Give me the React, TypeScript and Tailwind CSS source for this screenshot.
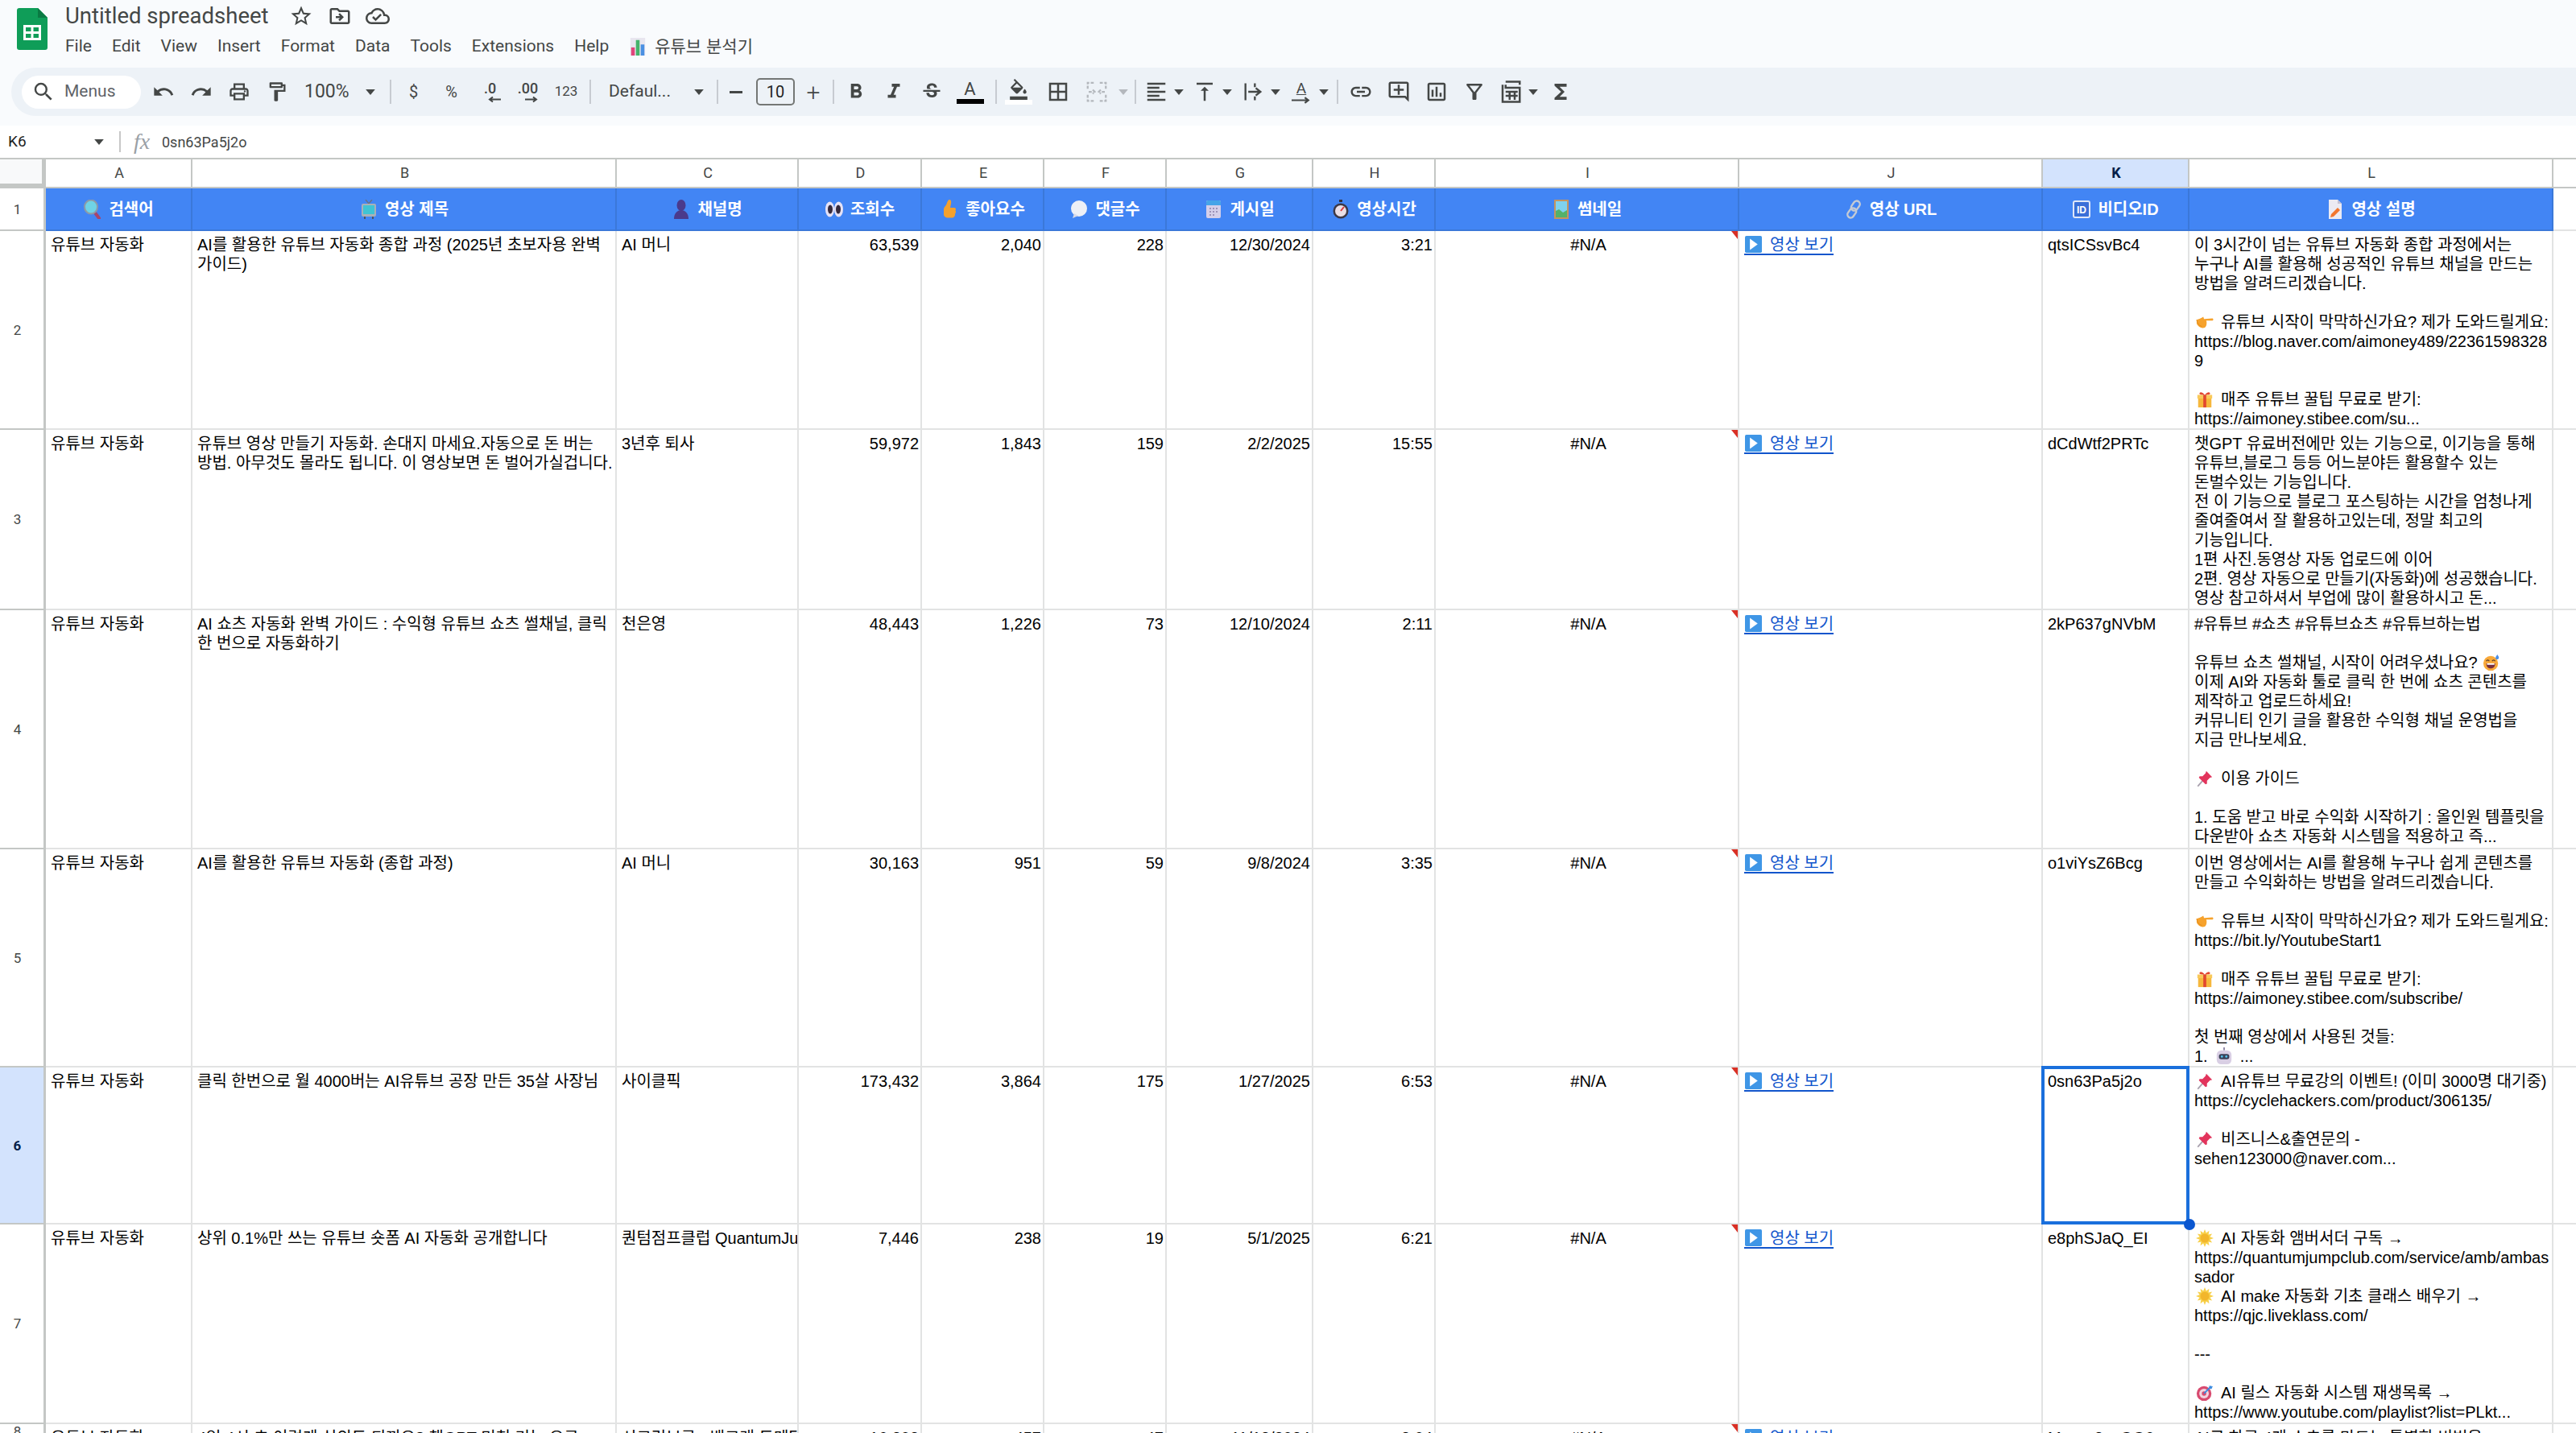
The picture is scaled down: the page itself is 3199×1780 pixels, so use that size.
import React from 'react'
import {
  MdArrowDropDown,
  MdBorderAll,
  MdFormatAlignLeft,
  MdFormatBold,
  MdFormatColorFill,
  MdFormatItalic,
  MdFunctions,
  MdLink,
  MdOutlineAddComment,
  MdOutlineCloudDone,
  MdOutlineDriveFileMove,
  MdOutlineFilterAlt,
  MdOutlineFormatPaint,
  MdOutlineInsertChart,
  MdOutlinePrint,
  MdRedo,
  MdSearch,
  MdStarBorder,
  MdStrikethroughS,
  MdUndo,
  MdVerticalAlignTop,
} from 'react-icons/md'

type EmojiName =
  | 'mag' | 'tv' | 'bust' | 'eyes' | 'thumb' | 'speech' | 'calendar' | 'timer' | 'picture'
  | 'link' | 'id' | 'doc' | 'play' | 'point' | 'gift' | 'sweat' | 'pin' | 'robot' | 'sun' | 'dart' | 'bars'

const Emoji: React.FC<{ name: EmojiName; className?: string }> = ({ name, className = 'w-[22px] h-[22px]' }) => {
  const shapes: Record<EmojiName, React.ReactNode> = {
    mag: (
      <>
        <path d="M14 15l6 8" stroke="#a8456b" strokeWidth="4" strokeLinecap="round" />
        <ellipse cx="10" cy="9" rx="8" ry="8.500" fill="#6fd3e6" stroke="#8d9aa8" strokeWidth="2" />
      </>
    ),
    tv: (
      <>
        <path d="M8 0l4 5 4-5" stroke="#6b7280" strokeWidth="1.400" fill="none" />
        <rect x="3" y="5" width="18" height="16" rx="2" fill="#a9b0b8" />
        <rect x="5" y="7" width="14" height="11" fill="#3fc4d4" />
        <path d="M7 21v3M17 21v3" stroke="#4b5563" strokeWidth="2" />
      </>
    ),
    bust: (
      <>
        <ellipse cx="12" cy="7" rx="5.500" ry="7" fill="#4a3a8c" />
        <path d="M3 24c0-7 4-11 9-11s9 4 9 11z" fill="#4a3a8c" />
      </>
    ),
    eyes: (
      <>
        <ellipse cx="6.500" cy="12" rx="5.500" ry="9.500" fill="#e6e2f5" />
        <ellipse cx="17.500" cy="12" rx="5.500" ry="9.500" fill="#e6e2f5" />
        <ellipse cx="7" cy="12" rx="3" ry="5.500" fill="#352a3e" />
        <ellipse cx="17" cy="12" rx="3" ry="5.500" fill="#352a3e" />
      </>
    ),
    thumb: (
      <path
        d="M12 0c2 0 2.500 2 2 5l-1 5h5c2 0 2.500 2 1.500 3.500 1 1.500.5 3-.5 4 .5 2-1 5-3 5H10c-2 0-5-1.500-5-4v-7c0-2 2-3 3-5 1-2 2-6.500 4-6.500z"
        fill="#f4a12e"
      />
    ),
    speech: (
      <>
        <ellipse cx="12" cy="11" rx="10" ry="10" fill="#eef0f6" />
        <path d="M6 17l-2 6 7-3z" fill="#d8dbe8" />
      </>
    ),
    calendar: (
      <>
        <rect x="3" y="1" width="18" height="22" rx="2" fill="#d5cfe9" />
        <path d="M3 3a2 2 0 012-2h14a2 2 0 012 2v4H3z" fill="#46a4e8" />
        <path d="M7 10h2v2H7zM11 10h2v2h-2zM15 10h2v2h-2zM7 14h2v2H7zM11 14h2v2h-2zM15 14h2v2h-2zM7 18h2v2H7zM11 18h2v2h-2z" fill="#9d93b8" />
      </>
    ),
    timer: (
      <>
        <rect x="10" y="0" width="4" height="3" fill="#33303c" />
        <circle cx="12" cy="14" r="9.500" fill="#3c3846" />
        <circle cx="12" cy="14" r="7" fill="#eadfe6" />
        <path d="M12 14l4-5" stroke="#d9383c" strokeWidth="2" />
      </>
    ),
    picture: (
      <>
        <rect x="3" y="0" width="18" height="24" fill="#c59560" />
        <rect x="5" y="2" width="14" height="20" fill="#7fd2ef" />
        <path d="M5 22v-8l4-2 5 4 5-3v9z" fill="#53b26a" />
      </>
    ),
    link: (
      <g fill="none" stroke="#c4cad4" strokeWidth="2.400">
        <rect x="10" y="1" width="8" height="13" rx="4" transform="rotate(35 14 8)" />
        <rect x="6" y="10" width="8" height="13" rx="4" transform="rotate(35 10 16)" />
      </g>
    ),
    id: (
      <>
        <rect x="2" y="2" width="20" height="20" rx="2" fill="#3a6fd8" stroke="#dfe7f8" strokeWidth="2" />
        <text x="12" y="16.500" textAnchor="middle" fontSize="12" fontWeight="700" fill="#fff" fontFamily="Liberation Sans">ID</text>
      </>
    ),
    doc: (
      <>
        <path d="M4 0h11l5 5v19H4z" fill="#eceaf2" />
        <path d="M15 0l5 5h-5z" fill="#c5c1d3" />
        <path d="M7 18l8-8 3 3-8 8-4 1z" fill="#f2762e" />
      </>
    ),
    play: (
      <>
        <rect x="0" y="0" width="24" height="24" rx="2" fill="#3f96e6" />
        <path d="M7 4l11 8-11 8z" fill="#fff" />
      </>
    ),
    point: (
      <>
        <path d="M1 9c3-1 6-2 9-4l1 3 11-1c2 0 2 3 0 3h-8c1 2 1 9-3 10-5 1-9-3-10-6z" fill="#f6a22c" />
        <path d="M1 9c1 5 3 8 7 9" stroke="#e28a18" strokeWidth="1" fill="none" />
      </>
    ),
    gift: (
      <>
        <rect x="3" y="10" width="18" height="13" fill="#f6b73c" />
        <rect x="2" y="6" width="20" height="5" fill="#f9c95a" />
        <rect x="10" y="6" width="4" height="17" fill="#e2472f" />
        <path d="M12 6C8 1 4 2 5 5c.5 1 4 1 7 1zm0 0c4-5 8-4 7-1-.5 1-4 1-7 1z" fill="#e2472f" />
      </>
    ),
    sweat: (
      <>
        <circle cx="11" cy="13" r="10" fill="#f8a93a" />
        <path d="M5 13h12c0 5-3 7-6 7s-6-2-6-7z" fill="#7a2e3b" />
        <path d="M6 13h10v2H6z" fill="#fff" />
        <path d="M5 10c1-2 3-2 4 0M13 10c1-2 3-2 4 0" stroke="#5a3b26" strokeWidth="1.400" fill="none" />
        <path d="M20 1c-2 3-3 4-2 6 1 1 3 1 4-1 .4-2-1-3-2-5z" fill="#4c8fe6" />
      </>
    ),
    pin: (
      <>
        <path d="M3 22l7-8" stroke="#a9a1ae" strokeWidth="2" strokeLinecap="round" />
        <path d="M14 2l8 8-3 1-4 4 0 4-2 1-9-9 1-2 4 0 4-4z" fill="#e2345c" />
      </>
    ),
    robot: (
      <>
        <rect x="11" y="0" width="2" height="4" fill="#8a84a3" />
        <rect x="2" y="4" width="20" height="19" rx="6" fill="#d9cfe4" />
        <rect x="5" y="9" width="14" height="7" rx="3" fill="#3a4258" />
        <circle cx="9" cy="12.500" r="1.500" fill="#58c6f0" />
        <circle cx="15" cy="12.500" r="1.500" fill="#58c6f0" />
      </>
    ),
    sun: (
      <>
        <path
          d="M12 0l2 5 4-3-1 5 5-1-3 4 5 2-5 2 3 4-5-1 1 5-4-3-2 5-2-5-4 3 1-5-5 1 3-4-5-2 5-2-3-4 5 1-1-5 4 3z"
          fill="#f8d04a"
        />
        <circle cx="12" cy="12" r="6" fill="#f2b62c" />
      </>
    ),
    dart: (
      <>
        <circle cx="11" cy="13" r="10" fill="#d84a6f" />
        <circle cx="11" cy="13" r="6.500" fill="#f1d3de" />
        <circle cx="11" cy="13" r="3" fill="#d84a6f" />
        <path d="M11 13L21 3" stroke="#3a8be0" strokeWidth="2" />
        <path d="M18 2l2 2 3-1-2 4-3-1z" fill="#3a8be0" />
      </>
    ),
    bars: (
      <>
        <rect x="2" y="0" width="20" height="24" fill="#e8e6ef" />
        <rect x="3" y="13" width="5" height="11" fill="#e0457b" />
        <rect x="9.500" y="3" width="5" height="21" fill="#45b36b" />
        <rect x="16" y="9" width="5" height="15" fill="#4a90e2" />
      </>
    ),
  }
  return (
    <svg viewBox="0 0 24 24" className={`shrink-0 ${className}`}>
      {shapes[name]}
    </svg>
  )
}

const SheetsLogo = () => (
  <svg viewBox="0 0 38 52" className="w-[38px] h-[52px] shrink-0">
    <path d="M3 0h23l12 12v37a3 3 0 01-3 3H3a3 3 0 01-3-3V3a3 3 0 013-3z" fill="#0f9d58" />
    <path d="M26 0l12 12H26z" fill="#0a7a43" />
    <path d="M8 21h22v19H8zm3 3v5h6.500v-5zm9.500 0v5H27v-5zM11 32v5h6.500v-5zm9.500 0v5H27v-5z" fill="#fff" fillRule="evenodd" />
  </svg>
)

const Sep = ({ className }: { className: string }) => <div className={`w-[2px] h-[30px] bg-[#c7cbd1] shrink-0 ${className}`} />

const Tool: React.FC<{ children: React.ReactNode; className?: string }> = ({ children, className = 'w-[47px]' }) => (
  <div className={`h-[40px] flex items-center justify-center shrink-0 text-[#444746] ${className}`}>{children}</div>
)

const Arrow = ({ className = 'text-[#444746]' }: { className?: string }) => (
  <svg viewBox="0 0 10 6" className={`w-[12px] h-[7px] shrink-0 ${className}`}>
    <path d="M0 0h10L5 6z" fill="currentColor" />
  </svg>
)

const DropTool: React.FC<{ children: React.ReactNode; className?: string }> = ({ children, className = '' }) => (
  <div className={`h-[40px] w-[60px] flex items-center shrink-0 text-[#444746] ${className}`}>
    <div className="w-[44px] flex justify-center">{children}</div>
    <Arrow />
  </div>
)

const Toolbar = () => (
  <div className="h-[60px] ml-[14px] pl-[13px] rounded-l-[30px] bg-[#edf2f7] flex items-center font-['Roboto',sans-serif]">
    <div className="w-[148px] h-[41px] rounded-full bg-white flex items-center shrink-0 text-[#444746]">
      <MdSearch className="w-[30px] h-[30px] ml-[12px]" />
      <span className="ml-[11px] text-[21px] text-[#5f6368]">Menus</span>
    </div>
    <Tool className="w-[47px] ml-[4px]"><MdUndo size={28} /></Tool>
    <Tool><MdRedo size={28} /></Tool>
    <Tool><MdOutlinePrint size={28} /></Tool>
    <Tool><MdOutlineFormatPaint size={28} /></Tool>
    <div className="w-[112px] h-[40px] flex items-center shrink-0 text-[23px] text-[#444746]">
      <span className="ml-[11px] w-[76px]">100%</span>
      <Arrow />
    </div>
    <Sep className="ml-[5px]" />
    <Tool className="w-[47px] ml-[4px] text-[20px]"><span>$</span></Tool>
    <Tool className="w-[47px] text-[20px]"><span>%</span></Tool>
    <Tool className="w-[47px] ml-[1px]">
      <div className="flex flex-col items-center leading-[18px] text-[18px] font-medium">
        <span>.0</span>
        <svg viewBox="0 0 16 8" className="w-[16px] h-[9px] ml-[10px]"><path d="M16 4H3M6 1L2 4l4 3" stroke="currentColor" strokeWidth="2" fill="none" /></svg>
      </div>
    </Tool>
    <Tool>
      <div className="flex flex-col items-center leading-[18px] text-[18px] font-medium">
        <span>.00</span>
        <svg viewBox="0 0 16 8" className="w-[16px] h-[9px] ml-[8px]"><path d="M0 4h13M10 1l4 3-4 3" stroke="currentColor" strokeWidth="2" fill="none" /></svg>
      </div>
    </Tool>
    <Tool className="w-[48px] text-[17px]"><span>123</span></Tool>
    <Sep className="ml-[5px]" />
    <div className="w-[156px] h-[40px] flex items-center shrink-0 text-[21px] text-[#444746]">
      <span className="ml-[22px] w-[106px]">Defaul...</span>
      <Arrow />
    </div>
    <Sep className="" />
    <Tool className="w-[44px] text-[24px]"><span className="w-[16px] h-[3px] bg-[#444746]" /></Tool>
    <div className="w-[48px] h-[34px] ml-[3px] rounded-[5px] border-2 border-[#747775] flex items-center justify-center text-[20px] text-[#1f1f1f] shrink-0">10</div>
    <Tool className="w-[46px] text-[30px] font-light"><span>+</span></Tool>
    <Sep className="ml-[1px]" />
    <Tool className="w-[47px] ml-[3px]"><MdFormatBold size={30} /></Tool>
    <Tool><MdFormatItalic size={30} /></Tool>
    <Tool className="w-[48px]"><MdStrikethroughS size={28} /></Tool>
    <Tool>
      <div className="flex flex-col items-center w-[34px]">
        <span className="text-[22px] leading-[24px]">A</span>
        <span className="w-[34px] h-[6px] bg-black" />
      </div>
    </Tool>
    <Sep className="ml-[8px]" />
    <Tool className="w-[47px] ml-[3px]">
      <div className="flex flex-col items-center w-[34px]">
        <MdFormatColorFill size={26} />
        <span className="w-[34px] h-[6px] bg-white" />
      </div>
    </Tool>
    <Tool className="w-[48px] ml-[2px]"><MdBorderAll size={30} /></Tool>
    <div className="w-[65px] ml-[3px] h-[40px] flex items-center shrink-0 text-[#b4b8bd]">
      <svg viewBox="0 0 24 24" className="w-[30px] h-[30px] ml-[6px]">
        <path d="M3 9V3h6M15 3h6v6M3 15v6h6M15 21h6v-6M4 12h6M8 10l2 2-2 2M20 12h-6M16 10l-2 2 2 2" stroke="currentColor" strokeWidth="1.800" fill="none" strokeDasharray="3 1.500" />
      </svg>
      <Arrow className="text-[#b4b8bd] ml-[12px]" />
    </div>
    <Sep className="ml-[3px]" />
    <DropTool className="ml-[3px]"><MdFormatAlignLeft size={30} /></DropTool>
    <DropTool><MdVerticalAlignTop size={30} /></DropTool>
    <DropTool>
      <svg viewBox="0 0 24 24" className="w-[28px] h-[28px]">
        <path d="M4 3v18M14 3v4M14 17v4M7 12h12M15 8l5 4-5 4" stroke="currentColor" strokeWidth="2" fill="none" />
      </svg>
    </DropTool>
    <DropTool>
      <div className="flex flex-col items-center text-[#444746]">
        <span className="text-[19px] leading-[20px] underline">A</span>
        <svg viewBox="0 0 22 8" className="w-[24px] h-[9px]"><path d="M0 4h19M15 1l4 3-4 3" stroke="currentColor" strokeWidth="2" fill="none" /></svg>
      </div>
    </DropTool>
    <Sep className="ml-[6px]" />
    <Tool className="w-[47px] ml-[4px]"><MdLink size={30} /></Tool>
    <Tool><MdOutlineAddComment size={30} /></Tool>
    <Tool><MdOutlineInsertChart size={30} /></Tool>
    <Tool><MdOutlineFilterAlt size={30} /></Tool>
    <DropTool>
      <svg viewBox="0 0 24 24" className="w-[30px] h-[30px]">
        <path d="M7 2h14v3M4 5v17h17V8H7v-3M11 12v8M16 12v8M7 12h12M7 16h12" stroke="currentColor" strokeWidth="2" fill="none" />
      </svg>
    </DropTool>
    <Tool><MdFunctions size={30} /></Tool>
  </div>
)

const menus = ['File', 'Edit', 'View', 'Insert', 'Format', 'Data', 'Tools', 'Extensions', 'Help']

const TopBar = () => (
  <div className="h-[156px] shrink-0 bg-[#f9fbfd]">
    <div className="h-[84px] flex">
      <div className="pl-[21px] pt-[10px] w-[81px] shrink-0">
        <SheetsLogo />
      </div>
      <div className="flex flex-col font-['Roboto',sans-serif]">
        <div className="h-[40px] flex items-center">
          <span className="text-[27.5px] text-[#444746] w-[278px]">Untitled spreadsheet</span>
          <MdStarBorder className="w-[30px] h-[30px] text-[#444746]" />
          <MdOutlineDriveFileMove className="w-[30px] h-[30px] text-[#444746] ml-[18px]" />
          <MdOutlineCloudDone className="w-[30px] h-[30px] text-[#444746] ml-[17px]" />
        </div>
        <div className="flex items-center gap-[25px] h-[36px] text-[21px] text-[#444746]">
          {menus.map((m) => (
            <span key={m}>{m}</span>
          ))}
          <span className="flex items-center gap-[10px] font-['Liberation_Sans','Noto_Sans_CJK_KR',sans-serif]">
            <Emoji name="bars" className="w-[22px] h-[24px]" />
            유튜브 분석기
          </span>
        </div>
      </div>
    </div>
    <Toolbar />
  </div>
)

const FormulaBar = () => (
  <div className="h-[40px] shrink-0 bg-white flex items-center font-['Roboto',sans-serif] text-[#1f1f1f]">
    <span className="ml-[10px] w-[107px] text-[19px]">K6</span>
    <Arrow />
    <div className="ml-[19px] w-[2px] h-[26px] bg-[#c7c7c7]" />
    <span className="ml-[16px] w-[35px] font-['Liberation_Serif',serif] italic text-[28px] text-[#9aa0a6]">fx</span>
    <span className="text-[18px] text-[#444746]">0sn63Pa5j2o</span>
  </div>
)

type Line = string | { e: EmojiName; t: string }

type Row = {
  n: number
  a: string
  b: string[]
  c: string
  d: string
  e: string
  f: string
  g: string
  h: string
  k: string
  l: Line[]
}

const rows: Row[] = [
  {
    n: 2,
    a: '유튜브 자동화',
    b: ['AI를 활용한 유튜브 자동화 종합 과정 (2025년 초보자용 완벽', '가이드)'],
    c: 'AI 머니',
    d: '63,539',
    e: '2,040',
    f: '228',
    g: '12/30/2024',
    h: '3:21',
    k: 'qtsICSsvBc4',
    l: [
      '이 3시간이 넘는 유튜브 자동화 종합 과정에서는',
      '누구나 AI를 활용해 성공적인 유튜브 채널을 만드는',
      '방법을 알려드리겠습니다.',
      '',
      { e: 'point', t: '유튜브 시작이 막막하신가요? 제가 도와드릴게요:' },
      'https://blog.naver.com/aimoney489/22361598328',
      '9',
      '',
      { e: 'gift', t: '매주 유튜브 꿀팁 무료로 받기:' },
      'https://aimoney.stibee.com/su...',
    ],
  },
  {
    n: 3,
    a: '유튜브 자동화',
    b: ['유튜브 영상 만들기 자동화. 손대지 마세요.자동으로 돈 버는', '방법. 아무것도 몰라도 됩니다. 이 영상보면 돈 벌어가실겁니다.'],
    c: '3년후 퇴사',
    d: '59,972',
    e: '1,843',
    f: '159',
    g: '2/2/2025',
    h: '15:55',
    k: 'dCdWtf2PRTc',
    l: [
      '챗GPT 유료버전에만 있는 기능으로, 이기능을 통해',
      '유튜브,블로그 등등 어느분야든 활용할수 있는',
      '돈벌수있는 기능입니다.',
      '전 이 기능으로 블로그 포스팅하는 시간을 엄청나게',
      '줄여줄여서 잘 활용하고있는데, 정말 최고의',
      '기능입니다.',
      '1편 사진.동영상 자동 업로드에 이어',
      '2편. 영상 자동으로 만들기(자동화)에 성공했습니다.',
      '영상 참고하셔서 부업에 많이 활용하시고 돈...',
    ],
  },
  {
    n: 4,
    a: '유튜브 자동화',
    b: ['AI 쇼츠 자동화 완벽 가이드 : 수익형 유튜브 쇼츠 썰채널, 클릭', '한 번으로 자동화하기'],
    c: '천은영',
    d: '48,443',
    e: '1,226',
    f: '73',
    g: '12/10/2024',
    h: '2:11',
    k: '2kP637gNVbM',
    l: [
      '#유튜브 #쇼츠 #유튜브쇼츠 #유튜브하는법',
      '',
      '유튜브 쇼츠 썰채널, 시작이 어려우셨나요? @',
      '이제 AI와 자동화 툴로 클릭 한 번에 쇼츠 콘텐츠를',
      '제작하고 업로드하세요!',
      '커뮤니티 인기 글을 활용한 수익형 채널 운영법을',
      '지금 만나보세요.',
      '',
      { e: 'pin', t: '이용 가이드' },
      '',
      '1. 도움 받고 바로 수익화 시작하기 : 올인원 템플릿을',
      '다운받아 쇼츠 자동화 시스템을 적용하고 즉...',
    ],
  },
  {
    n: 5,
    a: '유튜브 자동화',
    b: ['AI를 활용한 유튜브 자동화 (종합 과정)'],
    c: 'AI 머니',
    d: '30,163',
    e: '951',
    f: '59',
    g: '9/8/2024',
    h: '3:35',
    k: 'o1viYsZ6Bcg',
    l: [
      '이번 영상에서는 AI를 활용해 누구나 쉽게 콘텐츠를',
      '만들고 수익화하는 방법을 알려드리겠습니다.',
      '',
      { e: 'point', t: '유튜브 시작이 막막하신가요? 제가 도와드릴게요:' },
      'https://bit.ly/YoutubeStart1',
      '',
      { e: 'gift', t: '매주 유튜브 꿀팁 무료로 받기:' },
      'https://aimoney.stibee.com/subscribe/',
      '',
      '첫 번째 영상에서 사용된 것들:',
      '1. # ...',
    ],
  },
  {
    n: 6,
    a: '유튜브 자동화',
    b: ['클릭 한번으로 월 4000버는 AI유튜브 공장 만든 35살 사장님'],
    c: '사이클픽',
    d: '173,432',
    e: '3,864',
    f: '175',
    g: '1/27/2025',
    h: '6:53',
    k: '0sn63Pa5j2o',
    l: [
      { e: 'pin', t: 'AI유튜브 무료강의 이벤트! (이미 3000명 대기중)' },
      'https://cyclehackers.com/product/306135/',
      '',
      { e: 'pin', t: '비즈니스&출연문의 -' },
      'sehen123000@naver.com...',
    ],
  },
  {
    n: 7,
    a: '유튜브 자동화',
    b: ['상위 0.1%만 쓰는 유튜브 숏폼 AI 자동화 공개합니다'],
    c: '퀀텀점프클럽 QuantumJumpClub',
    d: '7,446',
    e: '238',
    f: '19',
    g: '5/1/2025',
    h: '6:21',
    k: 'e8phSJaQ_EI',
    l: [
      { e: 'sun', t: 'AI 자동화 앰버서더 구독 →' },
      'https://quantumjumpclub.com/service/amb/ambas',
      'sador',
      { e: 'sun', t: 'AI make 자동화 기초 클래스 배우기 →' },
      'https://qjc.liveklass.com/',
      '',
      '---',
      '',
      { e: 'dart', t: 'AI 릴스 자동화 시스템 재생목록 →' },
      'https://www.youtube.com/playlist?list=PLkt...',
    ],
  },
  {
    n: 8,
    a: '유튜브 자동화',
    b: ['4일 4시 초 이렇게 심의도 되끼요? 챗GPT 미친 기능 요구'],
    c: '시크릿보글 · 백그래 도메탐측',
    d: '16,803',
    e: '457',
    f: '47',
    g: '11/18/2024',
    h: '8:04',
    k: 'Msxxn8vaOO0',
    l: ['AI로 하루 4개 쇼츠를 만드는 특별한 비법을'],
  },
]

const heads: { e: EmojiName; t: string }[] = [
  { e: 'mag', t: '검색어' },
  { e: 'tv', t: '영상 제목' },
  { e: 'bust', t: '채널명' },
  { e: 'eyes', t: '조회수' },
  { e: 'thumb', t: '좋아요수' },
  { e: 'speech', t: '댓글수' },
  { e: 'calendar', t: '게시일' },
  { e: 'timer', t: '영상시간' },
  { e: 'picture', t: '썸네일' },
  { e: 'link', t: '영상 URL' },
  { e: 'id', t: '비디오ID' },
  { e: 'doc', t: '영상 설명' },
]

const letters = ['A', 'B', 'C', 'D', 'E', 'F', 'G', 'H', 'I', 'J', 'K', 'L']

const cellBox = 'min-w-0 border-r-2 border-b-2 border-[#e2e3e3] pt-[5px] pl-[6px] pr-[2px] whitespace-nowrap'
const cellBase = `${cellBox} overflow-hidden`
const numCell = `${cellBase} text-right`

const ColHeader = ({ label }: { label: string }) => {
  const active = label === 'K'
  return (
    <div
      className={`flex items-center justify-center pl-[2px] border-r-2 border-b-2 border-[#c4c7c5] font-['Roboto',sans-serif] text-[18px] ${
        active ? 'bg-[#d3e3fd] text-[#041e49] font-bold' : 'bg-white text-[#444746]'
      }`}
    >
      {label}
    </div>
  )
}

const RowHeader = ({ n, active = false }: { n: number; active?: boolean }) => (
  <div
    className={`flex items-center justify-center pr-[11px] border-r-[3px] border-b-2 border-[#c4c7c5] font-['Roboto',sans-serif] text-[17px] ${
      active ? 'bg-[#d3e3fd] text-[#041e49] font-bold' : 'bg-white text-[#444746]'
    }`}
  >
    {n}
  </div>
)

const DescLine = ({ line }: { line: Line }) => {
  if (typeof line === 'string') {
    if (line.endsWith('? @')) {
      return (
        <div className="h-[24px] flex items-center">
          {line.slice(0, -2)}
          <Emoji name="sweat" className="w-[22px] h-[22px] ml-[6px]" />
        </div>
      )
    }
    if (line === '1. # ...') {
      return (
        <div className="h-[24px] flex items-center">
          1.
          <Emoji name="robot" className="w-[22px] h-[22px] ml-[9px] mr-[9px]" />
          ...
        </div>
      )
    }
    return <div className="h-[24px]">{line}</div>
  }
  return (
    <div className="h-[24px] flex items-center">
      <span className="w-[33px] shrink-0 pl-[2px]">
        <Emoji name={line.e} />
      </span>
      {line.t}
    </div>
  )
}

const RowCells = ({ row }: { row: Row }) => {
  const selected = row.n === 6
  return (
    <>
      <RowHeader n={row.n} active={selected} />
      <div className={cellBase}>{row.a}</div>
      <div className={cellBase}>
        {row.b.map((t) => (
          <div key={t} className="h-[24px]">{t}</div>
        ))}
      </div>
      <div className={cellBase}>{row.c}</div>
      <div className={numCell}>{row.d}</div>
      <div className={numCell}>{row.e}</div>
      <div className={numCell}>{row.f}</div>
      <div className={numCell}>{row.g}</div>
      <div className={numCell}>{row.h}</div>
      <div className={`${cellBase} relative text-center`}>
        #N/A
        <span className="absolute top-0 right-0 w-0 h-0 border-t-[10px] border-l-[8px] border-t-[#d93025] border-l-transparent" />
      </div>
      <div className={cellBase}>
        <span className="inline-flex items-center h-[25px] border-b-2 border-[#1155cc] text-[#1155cc]">
          <Emoji name="play" className="w-[21px] h-[21px] mr-[10px] ml-[1px]" />
          영상 보기
        </span>
      </div>
      <div className={selected ? `${cellBox} relative` : cellBase}>
        {row.k}
        {selected && (
          <>
            <div className="absolute -top-[2px] -left-[2px] right-[-2px] bottom-[-2px] border-4 border-[#1a6fdc]" />
            <div className="absolute -right-[9px] -bottom-[9px] w-[14px] h-[14px] rounded-full bg-[#0b57d0]" />
          </>
        )}
      </div>
      <div className={cellBase}>
        {row.l.map((line, i) => (
          <DescLine key={i} line={line} />
        ))}
      </div>
      <div className="border-b-2 border-[#e2e3e3]" />
    </>
  )
}

const Sheet = () => (
  <div className="grid grid-cols-[57px_182px_527px_226px_153px_152px_152px_182px_152px_377px_377px_182px_452px_28px] grid-rows-[36px_53px_247px_224px_297px_271px_195px_248px_20px] border-t-2 border-[#c4c7c5] font-['Liberation_Sans','Noto_Sans_CJK_KR',sans-serif] text-[20px] leading-[24px] text-black">
    <div className="bg-[#f8f9fa] border-r-[5px] border-b-[6px] border-[#c4c7c5]" />
    {letters.map((l) => (
      <ColHeader key={l} label={l} />
    ))}
    <div className="border-b-2 border-[#c4c7c5]" />

    <RowHeader n={1} />
    {heads.map((h) => (
      <div
        key={h.t}
        className="bg-[#4285f4] border-r-2 border-b-2 border-[#3b78d9] flex items-center justify-center gap-[8px] text-white font-bold"
      >
        <Emoji name={h.e} className="w-[24px] h-[24px]" />
        <span>{h.t}</span>
      </div>
    ))}
    <div className="border-b-2 border-[#e2e3e3]" />

    {rows.map((r) => (
      <RowCells key={r.n} row={r} />
    ))}
  </div>
)

export default function App() {
  return (
    <div className="w-[3199px] h-[1780px] overflow-hidden bg-white flex flex-col">
      <TopBar />
      <FormulaBar />
      <Sheet />
    </div>
  )
}
